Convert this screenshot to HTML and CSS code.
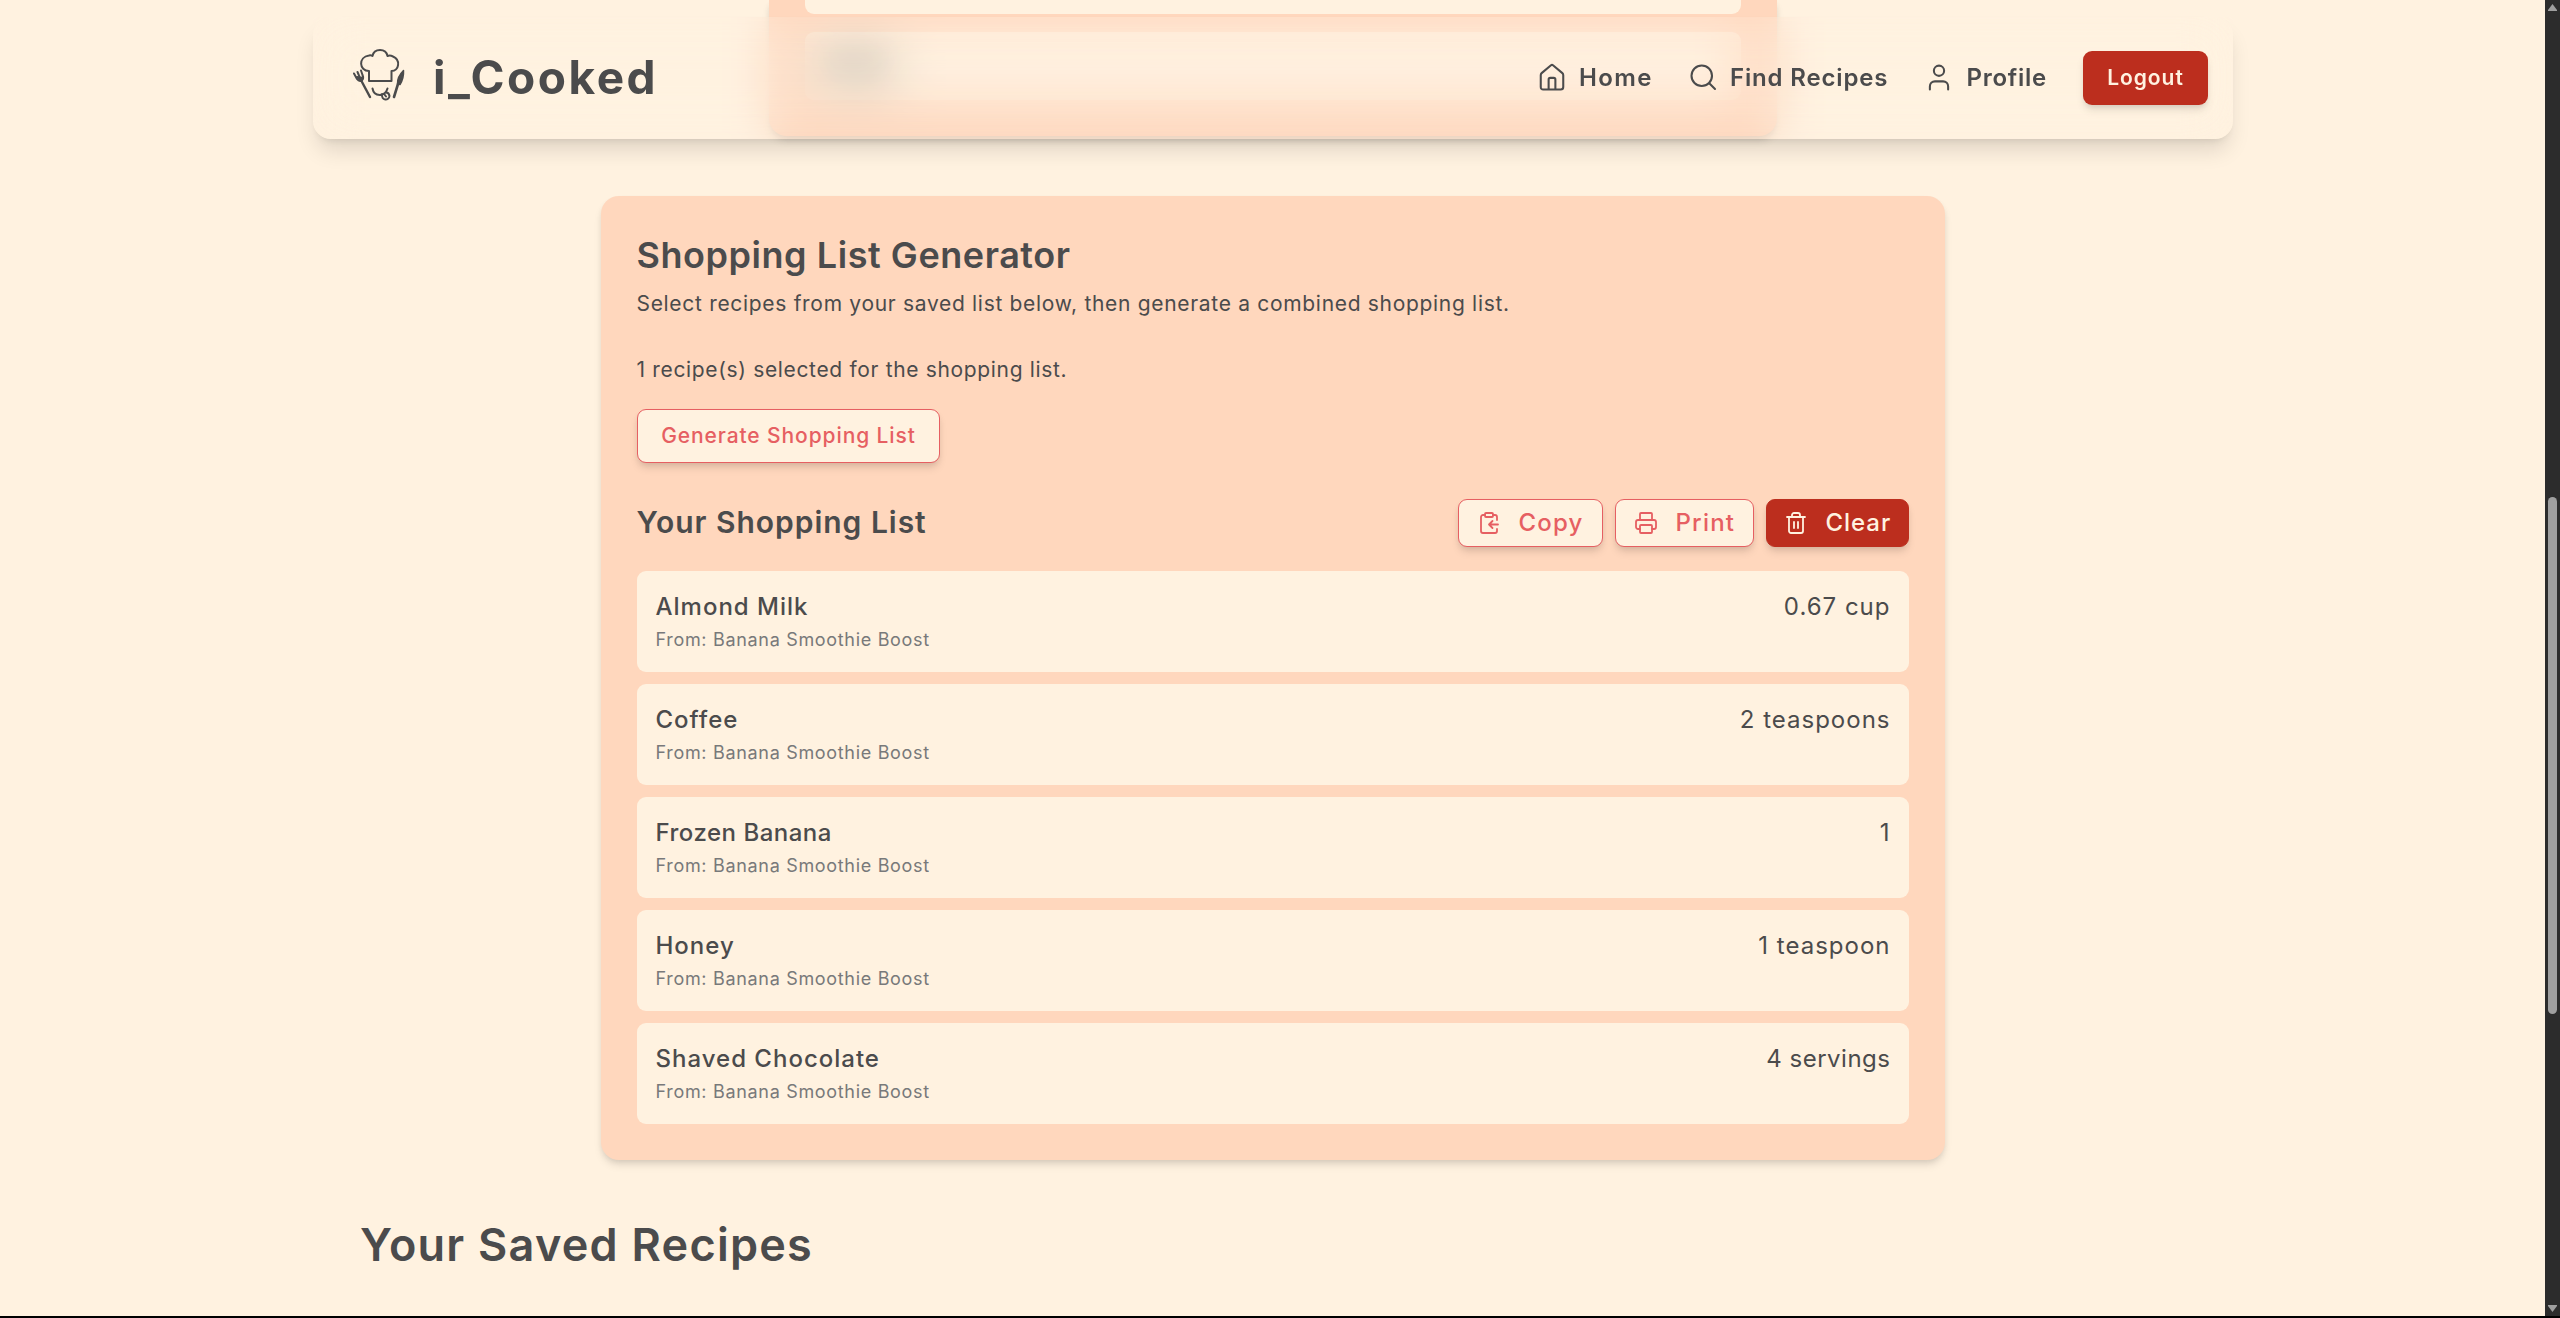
FILE: index.html
```html
<!DOCTYPE html>
<html lang="en">
<head>
<meta charset="utf-8">
<title>i_Cooked</title>
<link rel="stylesheet" href="styles.css">
</head>
<body>
<div class="page">
  <nav class="navbar">
    <svg class="logo" viewBox="0 0 80 80" fill="none" stroke="currentColor" stroke-linecap="round" stroke-linejoin="round">
      <path d="M29 45V35C19 35 18 21 29 19.500Q31 19 32.500 20C34 12 46 12 47.500 20Q50 19 53 20.500C61 24 59 35 51.500 35V45Z"/>
      <path d="M22 46L30 61" stroke-width="2.400"/>
      <path d="M14 37.500L17 43Q19 46 22 44.500Q24 42 22.500 39L21 34.500M17.500 36L20 42"/>
      <path d="M17 41L21 45L23 42Z" fill="currentColor"/>
      <path d="M58 48L54 61" stroke-width="2.600"/>
      <path d="M63.500 34.500Q57 41 57.500 48L60 48.500Q64 42 63.500 34.500Z" fill="currentColor" stroke-width="1.500"/>
      <path d="M32.500 52.500C34 61 45 61 47.500 52.500M42 58C41 65 49 65 49.500 60Q49 56.500 46 56.500M44.500 58.500L46 60.500"/>
    </svg>
    <span class="brand">i_Cooked</span>
    <div class="links">
      <a class="link home"><svg class="ic" viewBox="0 0 24 24"><path d="M3 20V10.500Q3 9.500 3.700 8.900L11.200 2.600Q12 2 12.800 2.600L20.300 8.900Q21 9.500 21 10.500V20Q21 22 19 22H5Q3 22 3 20ZM9.300 22V14Q9.300 12.700 10.600 12.700H13.400Q14.700 12.700 14.700 14V22"/></svg><span>Home</span></a>
      <a class="link find"><svg class="ic" viewBox="0 0 24 24"><circle cx="11" cy="11" r="8.200"/><path d="M17 17L21.600 21.600"/></svg><span>Find Recipes</span></a>
      <a class="link prof"><svg class="ic" viewBox="0 0 24 24"><circle cx="12" cy="7" r="4.100"/><path d="M19.300 22v-2.500a4 4 0 0 0-4-4H8.700a4 4 0 0 0-4 4V22"/></svg><span>Profile</span></a>
      <button class="logout">Logout</button>
    </div>
  </nav>

  <section class="upper">
    <div class="upper-row first"></div>
    <div class="upper-row"><i class="label"></i></div>
  </section>

  <section class="card">
    <h2 class="title">Shopping List Generator</h2>
    <p class="lead">Select recipes from your saved list below, then generate a combined shopping list.</p>
    <p class="count">1 recipe(s) selected for the shopping list.</p>
    <button class="generate">Generate Shopping List</button>
    <div class="list-head">
      <h3 class="subtitle">Your Shopping List</h3>
      <div class="actions">
        <button class="act copy"><svg viewBox="0 0 24 24"><rect x="8" y="2" width="8" height="4" rx="1"/><path d="M16 4h2a2 2 0 0 1 2 2v3M8 4H6a2 2 0 0 0-2 2v14a2 2 0 0 0 2 2h12a2 2 0 0 0 2-2v-2M21 13.500H12M15.500 10L12 13.500L15.500 17"/></svg><span>Copy</span></button>
        <button class="act print"><svg viewBox="0 0 24 24"><path d="M6 18H4a2 2 0 0 1-2-2v-5a2 2 0 0 1 2-2h16a2 2 0 0 1 2 2v5a2 2 0 0 1-2 2h-2M6 9V3a1 1 0 0 1 1-1h10a1 1 0 0 1 1 1v6"/><rect x="6" y="14" width="12" height="8" rx="1"/></svg><span>Print</span></button>
        <button class="act clear"><svg viewBox="0 0 24 24"><path d="M3 6h18M19 6v14a2 2 0 0 1-2 2H7a2 2 0 0 1-2-2V6M8 6V4a2 2 0 0 1 2-2h4a2 2 0 0 1 2 2v2M10 11v6M14 11v6"/></svg><span>Clear</span></button>
      </div>
    </div>
    <ul class="items">
      <li><div><p class="name">Almond Milk</p><p class="from">From: Banana Smoothie Boost</p></div><span class="amount">0.67 cup</span></li>
      <li><div><p class="name">Coffee</p><p class="from">From: Banana Smoothie Boost</p></div><span class="amount">2 teaspoons</span></li>
      <li><div><p class="name tight">Frozen Banana</p><p class="from">From: Banana Smoothie Boost</p></div><span class="amount">1</span></li>
      <li><div><p class="name">Honey</p><p class="from">From: Banana Smoothie Boost</p></div><span class="amount">1 teaspoon</span></li>
      <li><div><p class="name">Shaved Chocolate</p><p class="from">From: Banana Smoothie Boost</p></div><span class="amount tight">4 servings</span></li>
    </ul>
  </section>
  <h2 class="saved">Your Saved Recipes</h2>
</div>
<div class="scrollbar"><i class="up"></i><i class="thumb"></i><i class="down"></i></div>
</body>
</html>
```
FILE: styles.css
```css
* { box-sizing: border-box; margin: 0; padding: 0; }
body {
  position: relative;
  display: flex;
  width: 2560px;
  height: 1318px;
  overflow: hidden;
  border-bottom: 2px solid #000;
  background: #fff2e0;
  color: #4b4b4c;
  font-family: Inter, "Liberation Sans", sans-serif;
  white-space: nowrap;
}
button { font-family: inherit; border: 0; }
ul { list-style: none; }
svg { flex: none; fill: none; stroke: currentColor; stroke-width: 2; stroke-linecap: round; stroke-linejoin: round; }
.page { position: relative; width: 2545px; height: 1316px; }

.navbar {
  position: absolute;
  z-index: 2;
  left: 312.5px;
  top: 17px;
  width: 1920px;
  height: 122px;
  display: flex;
  align-items: center;
  padding: 0 24.5px 0 27.5px;
  border-radius: 18px;
  box-shadow: 0 15px 22px -4px rgba(0,0,0,.12), 0 6px 9px -6px rgba(0,0,0,.12);
}
.navbar::before {
  content: "";
  position: absolute;
  z-index: -1;
  inset: 0;
  border-radius: 0 0 18px 18px;
  background: rgba(255,241,227,.1);
  backdrop-filter: blur(24px);
  opacity: .92;
}
.logo { width: 80px; height: 80px; margin-top: -4px; }
.brand { margin: -3px 0 0 13px; font-size: 46px; line-height: 60px; font-weight: 700; letter-spacing: 2.5px; }
.links { display: flex; align-items: center; margin-left: auto; }
.link { display: flex; align-items: center; gap: 12px; margin-top: -1px; font-size: 24px; font-weight: 600; }
.ic { width: 30px; height: 30px; margin-top: -1px; stroke-width: 1.65; }
.home { letter-spacing: 1.4px; }
.find { margin-left: 35px; letter-spacing: .85px; }
.prof { margin-left: 36px; letter-spacing: .75px; }
.logout {
  width: 125px;
  height: 54px;
  margin-left: 36px;
  padding-bottom: 2px;
  border-radius: 9px;
  background: #bc2e1e;
  color: #fff2e0;
  font-size: 21px;
  font-weight: 600;
  letter-spacing: .95px;
  box-shadow: 0 6px 9px -1px rgba(0,0,0,.1), 0 3px 6px -2px rgba(0,0,0,.1);
}

.upper {
  width: 1008px;
  height: 136px;
  margin: 0 auto;
  padding: 0 36px 36px;
  border-radius: 0 0 18px 18px;
  background: #ffd7bd;
  box-shadow: 0 6px 9px -1px rgba(0,0,0,.1), 0 3px 6px -2px rgba(0,0,0,.1);
}
.upper-row { height: 68px; padding: 23px 18px; border-radius: 9px; background: #fff2e0; }
.upper-row.first { height: 14px; margin-bottom: 18px; padding: 0; border-radius: 0 0 9px 9px; }
.label { display: block; width: 66px; height: 22px; background: #a9a59b; filter: blur(12px); }

.card {
  width: 1344px;
  height: 964px;
  margin: 60px auto 0;
  padding: 36px;
  border-radius: 18px;
  background: #ffd7bd;
  box-shadow: 0 6px 9px -1px rgba(0,0,0,.1), 0 3px 6px -2px rgba(0,0,0,.1);
}
.title { height: 48px; font-size: 36px; line-height: 46px; font-weight: 600; letter-spacing: .55px; }
.lead { height: 48px; font-size: 21px; line-height: 48px; letter-spacing: .69px; }
.count { height: 60px; margin-top: 12px; padding-top: 6px; font-size: 21px; line-height: 48px; letter-spacing: .66px; }
.generate {
  display: block;
  width: 303px;
  height: 54px;
  margin-top: 9px;
  padding: 0 0 1px 1px;
  border: 1px solid #e65f62;
  border-radius: 9px;
  background: #fff2e0;
  color: #e65f62;
  font-size: 21px;
  font-weight: 500;
  letter-spacing: .9px;
  box-shadow: 0 6px 9px -1px rgba(0,0,0,.1), 0 3px 6px -2px rgba(0,0,0,.1);
}
.list-head { display: flex; align-items: center; justify-content: space-between; height: 48px; margin-top: 36px; }
.subtitle { margin-top: -2px; font-size: 30px; font-weight: 600; letter-spacing: .98px; }
.actions { display: flex; gap: 12px; }
.act {
  display: flex;
  align-items: center;
  gap: 18px;
  height: 48px;
  padding-left: 18px;
  border: 1px solid #e65f62;
  border-radius: 9px;
  background: #fff2e0;
  color: #e65f62;
  font-size: 24px;
  font-weight: 500;
  letter-spacing: 1.2px;
  box-shadow: 0 6px 9px -1px rgba(0,0,0,.1), 0 3px 6px -2px rgba(0,0,0,.1);
}
.act span { margin-top: -2px; }
.act svg { width: 24px; height: 24px; stroke-width: 1.8; }
.copy { width: 145px; }
.print { width: 139px; }
.clear { width: 143px; padding-left: 17px; background: #bc2e1e; border-color: #bc2e1e; color: #fff2e0; letter-spacing: .95px; }

.items { display: grid; gap: 12px; margin-top: 24px; }
.items li {
  display: flex;
  justify-content: space-between;
  height: 101px;
  padding: 18px 18px 18px 19px;
  border-radius: 9px;
  background: #fff2e0;
}
.name, .amount { font-size: 24px; line-height: 36px; letter-spacing: 1px; }
.name { font-weight: 500; }
.tight { letter-spacing: .5px; }
.from { font-size: 18px; line-height: 30px; color: #78797a; letter-spacing: .68px; }
.saved { margin: 55px 0 0 360px; font-size: 45px; line-height: 60px; font-weight: 600; letter-spacing: 1.25px; }

.scrollbar { position: relative; width: 15px; height: 1316px; background: #2c2c2c; }
.thumb { position: absolute; left: 3px; top: 497px; width: 9px; height: 517px; border-radius: 5px; background: #9f9f9f; }
.up, .down { position: absolute; left: 3px; width: 9px; height: 7px; background: #9f9f9f; }
.up { top: 4px; clip-path: polygon(50% 0, 100% 85%, 100% 100%, 0 100%, 0 85%); }
.down { bottom: 4px; clip-path: polygon(0 0, 100% 0, 100% 15%, 50% 100%, 0 15%); }
```
